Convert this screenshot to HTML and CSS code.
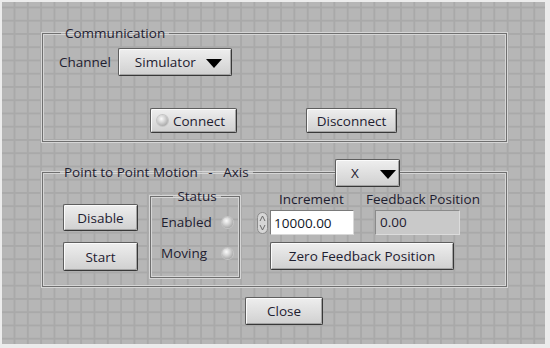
FILE: index.html
```html
<!DOCTYPE html>
<html lang="en">
<head>
    <meta charset="UTF-8">
    <meta name="viewport" content="width=device-width, initial-scale=1.0">
    <title>Motion Control Panel</title>
    <link rel="stylesheet" href="styles.css">
</head>
<body>
    <div class="panel">
        <fieldset class="group comm">
            <legend>Communication</legend>
            <div class="channel-row">
                <span class="label">Channel</span>
                <div class="ring channel">Simulator<span class="arrow"></span></div>
            </div>
            <div class="conn-row">
                <button class="btn connect"><span class="led"></span>Connect</button>
                <button class="btn disconnect">Disconnect</button>
            </div>
        </fieldset>

        <fieldset class="group motion">
            <legend>Point to Point Motion &nbsp;&nbsp;- &nbsp;&nbsp;Axis</legend>
            <!-- axis selector sits on the frame line -->
            <div class="ring axis">X<span class="arrow"></span></div>
            <div class="motion-body">
                <div class="col-buttons">
                    <button class="btn disable">Disable</button>
                    <button class="btn start">Start</button>
                </div>

                <fieldset class="group status">
                    <legend>Status</legend>
                    <div class="status-row enabled"><span>Enabled</span><span class="led"></span></div>
                    <div class="status-row moving"><span>Moving</span><span class="led"></span></div>
                </fieldset>

                <div class="numerics">
                    <div class="num-row">
                        <div class="field">
                            <span class="cap inc-cap">Increment</span>
                            <div class="num-wrap">
                                <svg class="spin" width="11" height="22" viewBox="0 0 11 22">
                                    <rect x="0.5" y="0.5" width="10" height="21" rx="5" fill="#d6d6d6" stroke="#8c8c8c"/>
                                    <path d="M3 9 L5.5 4 L8 9" fill="none" stroke="#6a6a6a" stroke-width="1"/>
                                    <path d="M3 13 L5.5 18 L8 13" fill="none" stroke="#6a6a6a" stroke-width="1"/>
                                </svg>
                                <input class="num-input" type="text" value="10000.00">
                            </div>
                        </div>
                        <div class="field">
                            <span class="cap fb-cap">Feedback Position</span>
                            <div class="indicator">0.00</div>
                        </div>
                    </div>
                    <button class="btn zero">Zero Feedback Position</button>
                </div>
            </div>
        </fieldset>

        <button class="btn close">Close</button>
    </div>
</body>
</html>
```

FILE: styles.css
```css
body {
    margin: 0;
    padding: 0;
    background-color: #ececec;
    font-family: "Open Sans", "Liberation Sans", sans-serif;
    font-size: 13.5px;
    color: #1e2030;
}
.panel {
    box-sizing: border-box;
    width: 543px;
    height: 342px;
    margin: 2px 0 0 2px;
    padding: 23px 0 0 40px;
    background-color: #b6b6b6;
    background-image:
        linear-gradient(to right, #a9a9a9 1.5px, transparent 1.5px),
        linear-gradient(to bottom, #a9a9a9 1.5px, transparent 1.5px);
    background-size: 13.33px 13.25px;
    background-position: -1.8px 4.5px;
}

/* group frames */
.group {
    box-sizing: border-box;
    margin: 0;
    min-width: 0;
    border: 1px solid #6f6f6f;
    box-shadow: 0 0 0 1px #d6d6d6, inset 0 0 0 1px #d6d6d6;
}
.group legend {
    padding: 0 4px;
    line-height: 16px;
}
.comm {
    width: 465px;
    padding: 7px 0 8px 16px;
}
.comm legend {
    margin-left: 2px;
}
.channel-row {
    display: flex;
    align-items: center;
    gap: 7px;
}
.conn-row {
    display: flex;
    margin-top: 32px;
    margin-left: 91px;
    gap: 69px;
}

/* buttons and rings */
.btn, .ring {
    box-sizing: border-box;
    font-family: inherit;
    font-size: 13.5px;
    color: #1e2030;
    border: 1px solid #5e5e5e;
    border-right-color: #383838;
    border-bottom-color: #383838;
    border-radius: 2px;
    background: linear-gradient(#eeeeee, #d0d0d0);
    box-shadow: inset 1px 1px 0 #fbfbfb, inset -1px -1px 0 #a3a3a3;
    padding: 0;
    display: flex;
    align-items: center;
    justify-content: center;
}
.ring {
    justify-content: space-between;
}
.arrow {
    width: 0;
    height: 0;
    border-left: 8px solid transparent;
    border-right: 8px solid transparent;
    border-top: 9px solid #000;
    margin-top: 3px;
}
.channel {
    width: 114px;
    height: 28px;
    padding: 0 9px 0 16px;
}
.axis {
    position: absolute;
    top: -21px;
    left: 292px;
    width: 65px;
    height: 28px;
    padding: 0 3px 0 15px;
}
.connect {
    width: 87px;
    height: 25px;
    gap: 5px;
    justify-content: flex-start;
    padding-left: 6px;
}
.disconnect {
    width: 91px;
    height: 25px;
}
.led {
    display: inline-block;
    width: 11px;
    height: 11px;
    border-radius: 50%;
    background: radial-gradient(circle at 40% 35%, #fafafa 0, #d2d2d2 40%, #8e8e8e 100%);
    box-shadow: 0 0 0 1px #c4c4c4;
}

/* motion group */
.motion {
    position: relative;
    width: 465px;
    margin-top: 22px;
    padding: 8px 0 8px 20px;
}
.motion > legend {
    margin-left: -3px;
}
.motion-body {
    display: flex;
    align-items: flex-start;
}
.col-buttons {
    display: flex;
    flex-direction: column;
    gap: 11px;
    margin-top: 16px;
}
.disable {
    width: 75px;
    height: 27px;
}
.start {
    width: 75px;
    height: 29px;
}
.status {
    width: 90px;
    margin-left: 12px;
    padding: 9px 6px 15px 10px;
}
.status legend {
    margin: 0 auto;
}
.status-row {
    display: flex;
    justify-content: space-between;
    align-items: center;
    height: 18px;
}
.moving {
    margin-top: 13px;
}

.numerics {
    margin-left: 17px;
    margin-top: 3px;
}
.num-row {
    display: flex;
    gap: 12px;
}
.field {
    display: flex;
    flex-direction: column;
}
.cap {
    line-height: 16px;
    margin-bottom: 3px;
}
.inc-cap {
    margin-left: 22px;
}
.num-wrap {
    display: flex;
    align-items: center;
    gap: 2px;
}
.num-input {
    box-sizing: border-box;
    width: 84px;
    height: 25px;
    margin: 0;
    padding: 0 3px;
    font-family: inherit;
    font-size: 13.5px;
    color: #101828;
    background: #ffffff;
    border: 1px solid #d8d8d8;
    border-top-color: #7a7a7a;
    border-left-color: #7a7a7a;
}
.indicator {
    box-sizing: border-box;
    width: 85px;
    height: 25px;
    margin-left: 9px;
    padding: 0 4px;
    line-height: 23px;
    background: #c9c9c9;
    border: 1px solid #dcdcdc;
    border-top-color: #8a8a8a;
    border-left-color: #8a8a8a;
}
.zero {
    width: 184px;
    height: 28px;
    margin-top: 7px;
    margin-left: 13px;
}
.close {
    width: 78px;
    height: 28px;
    margin-top: 10px;
    margin-left: 203px;
}
```
